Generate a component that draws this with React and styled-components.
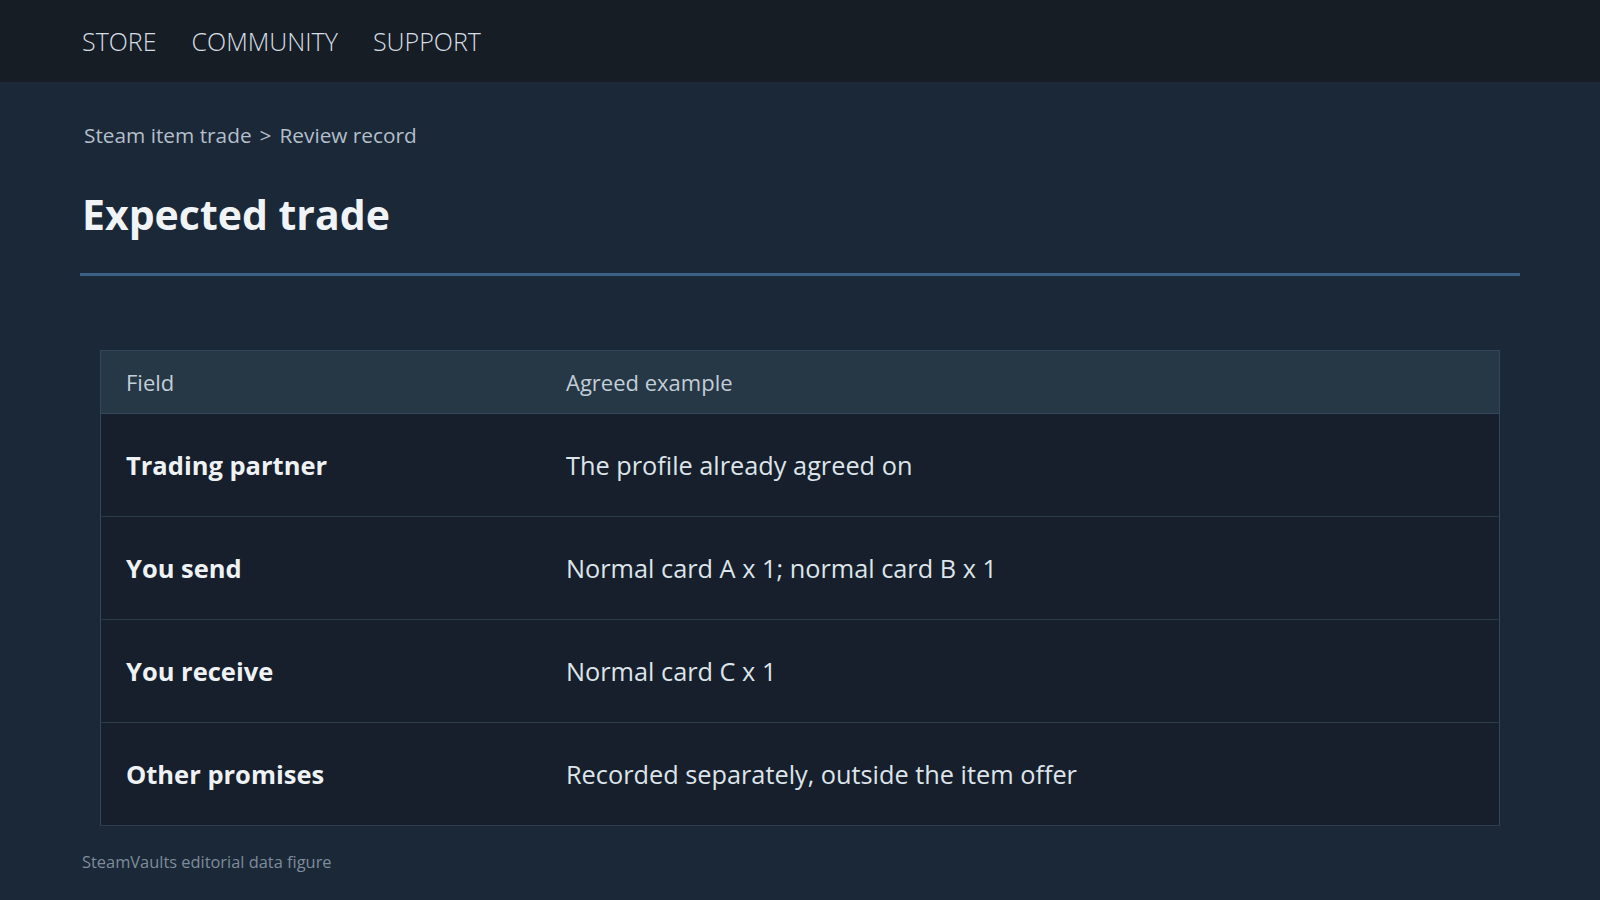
import styled, { createGlobalStyle } from 'styled-components';

const GlobalStyle = createGlobalStyle`
  html, body {
    margin: 0;
    padding: 0;
    background: #1b2838;
  }
  body {
    font-family: "Open Sans", "Noto Sans", "Liberation Sans", sans-serif;
    color: #e6edf3;
  }
`;

const TopBar = styled.header`
  height: 82px;
  background: #171d25;
  display: flex;
  align-items: center;
  gap: 35px;
  padding: 0 82px;
  box-sizing: border-box;
`;

const NavLink = styled.a`
  font-size: 25px;
  font-weight: 300;
  color: #d6dee5;
  text-decoration: none;
`;

const Page = styled.main`
  padding: 0 80px;
  display: flex;
  flex-direction: column;
`;

const Crumbs = styled.div`
  margin-top: 38px;
  padding-left: 4px;
  font-size: 20.8px;
  line-height: 30px;
  color: #b3bfca;
  display: flex;
  gap: 8px;
`;

const Title = styled.h1`
  margin: 36px 0 0;
  padding-left: 2px;
  font-size: 41px;
  line-height: 56px;
  font-weight: 700;
  color: #f1f4f6;
`;

const Rule = styled.hr`
  margin: 31px 0 0;
  border: 0;
  height: 3px;
  background: #3b6186;
`;

const Figure = styled.figure`
  margin: 74px 20px 0;
`;

const Table = styled.table`
  width: 100%;
  border-collapse: collapse;
  border: 1px solid #34465a;
`;

const HeadCell = styled.th`
  text-align: left;
  font-weight: 400;
  font-size: 22px;
  color: #c2ced8;
  background: #263746;
  height: 62px;
  padding: 0 25px;
  border-bottom: 1px solid #34465a;
  width: ${p => (p.$first ? '390px' : 'auto')};
`;

const Row = styled.tr`
  background: #161f2b;
  border-bottom: 1px solid #2d3c4b;
`;

const LabelCell = styled.td`
  height: 102px;
  padding: 0 25px;
  font-size: 25.5px;
  font-weight: 700;
  color: #eef2f5;
`;

const ValueCell = styled.td`
  padding: 0 25px;
  font-size: 25.3px;
  color: #dde4ea;
`;

const Caption = styled.figcaption`
  margin: 24px 0 0 -18px;
  font-size: 16.4px;
  color: #7e8c9b;
`;

const rows = [
  ['Trading partner', 'The profile already agreed on'],
  ['You send', 'Normal card A x 1; normal card B x 1'],
  ['You receive', 'Normal card C x 1'],
  ['Other promises', 'Recorded separately, outside the item offer'],
];

export default function App() {
  return (
    <>
      <GlobalStyle />
      <TopBar>
        <NavLink>STORE</NavLink>
        <NavLink>COMMUNITY</NavLink>
        <NavLink>SUPPORT</NavLink>
      </TopBar>
      <Page>
        <Crumbs>
          <span>Steam item trade</span>
          <span>&gt;</span>
          <span>Review record</span>
        </Crumbs>
        <Title>Expected trade</Title>
        <Rule />
        <Figure>
          <Table>
            <thead>
              <tr>
                <HeadCell $first>Field</HeadCell>
                <HeadCell>Agreed example</HeadCell>
              </tr>
            </thead>
            <tbody>
              {rows.map(([label, value]) => (
                <Row key={label}>
                  <LabelCell>{label}</LabelCell>
                  <ValueCell>{value}</ValueCell>
                </Row>
              ))}
            </tbody>
          </Table>
          <Caption>SteamVaults editorial data figure</Caption>
        </Figure>
      </Page>
    </>
  );
}
